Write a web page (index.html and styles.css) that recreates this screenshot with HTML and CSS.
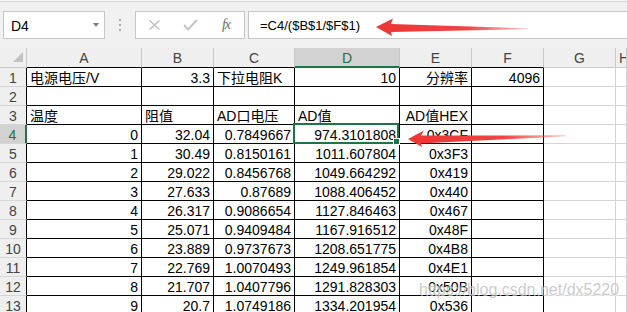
FILE: index.html
```html
<!DOCTYPE html>
<html lang="zh-CN">
<head>
    <meta charset="UTF-8">
    <title>AD值计算</title>
    <link rel="stylesheet" href="styles.css">
</head>
<body>
    <div class="bar">
        <div class="namebox">D4<span class="caret"></span></div>
        <div class="grip"><i></i><i></i><i></i></div>
        <div class="fxbox">
            <span class="btn"><svg width="11" height="10" viewBox="0 0 11 10"><path d="M0.5 0.5 10.5 9.5 M10.5 0.5 0.5 9.5" stroke="#bdbdbd" stroke-width="1.3" fill="none"/></svg></span>
            <span class="btn"><svg width="15" height="12" viewBox="0 0 15 12"><path d="M1 6 5 10.5 14 1" stroke="#c4c4c4" stroke-width="2" fill="none"/></svg></span>
            <span class="btn fx">fx</span>
        </div>
        <div class="formula">=C4/($B$1/$F$1)</div>
    </div>

    <div class="sheet">
        <div class="corner"><svg width="10" height="10" viewBox="0 0 10 10"><path d="M10 0 10 10 0 10Z" fill="#c2c2c2"/></svg></div>
        <div class="ch">A</div><div class="ch">B</div><div class="ch">C</div><div class="ch on">D</div><div class="ch">E</div><div class="ch">F</div><div class="ch g">G</div><div class="ch g">H</div>

        <div class="rh">1</div><div class="c">电源电压/V</div><div class="c n">3.3</div><div class="c">下拉电阻K</div><div class="c n">10</div><div class="c n">分辨率</div><div class="c n">4096</div><div class="c g"></div><div class="c g"></div>
        <div class="rh">2</div><div class="c"></div><div class="c"></div><div class="c"></div><div class="c"></div><div class="c"></div><div class="c"></div><div class="c g"></div><div class="c g"></div>
        <div class="rh">3</div><div class="c">温度</div><div class="c">阻值</div><div class="c">AD口电压</div><div class="c">AD值</div><div class="c n">AD值HEX</div><div class="c"></div><div class="c g"></div><div class="c g"></div>
        <div class="rh on">4</div><div class="c n">0</div><div class="c n">32.04</div><div class="c n">0.7849667</div><div class="c n sel">974.3101808</div><div class="c n">0x3CF</div><div class="c"></div><div class="c g"></div><div class="c g"></div>
        <div class="rh">5</div><div class="c n">1</div><div class="c n">30.49</div><div class="c n">0.8150161</div><div class="c n">1011.607804</div><div class="c n">0x3F3</div><div class="c"></div><div class="c g"></div><div class="c g"></div>
        <div class="rh">6</div><div class="c n">2</div><div class="c n">29.022</div><div class="c n">0.8456768</div><div class="c n">1049.664292</div><div class="c n">0x419</div><div class="c"></div><div class="c g"></div><div class="c g"></div>
        <div class="rh">7</div><div class="c n">3</div><div class="c n">27.633</div><div class="c n">0.87689</div><div class="c n">1088.406452</div><div class="c n">0x440</div><div class="c"></div><div class="c g"></div><div class="c g"></div>
        <div class="rh">8</div><div class="c n">4</div><div class="c n">26.317</div><div class="c n">0.9086654</div><div class="c n">1127.846463</div><div class="c n">0x467</div><div class="c"></div><div class="c g"></div><div class="c g"></div>
        <div class="rh">9</div><div class="c n">5</div><div class="c n">25.071</div><div class="c n">0.9409484</div><div class="c n">1167.916512</div><div class="c n">0x48F</div><div class="c"></div><div class="c g"></div><div class="c g"></div>
        <div class="rh">10</div><div class="c n">6</div><div class="c n">23.889</div><div class="c n">0.9737673</div><div class="c n">1208.651775</div><div class="c n">0x4B8</div><div class="c"></div><div class="c g"></div><div class="c g"></div>
        <div class="rh">11</div><div class="c n">7</div><div class="c n">22.769</div><div class="c n">1.0070493</div><div class="c n">1249.961854</div><div class="c n">0x4E1</div><div class="c"></div><div class="c g"></div><div class="c g"></div>
        <div class="rh">12</div><div class="c n">8</div><div class="c n">21.707</div><div class="c n">1.0407796</div><div class="c n">1291.828303</div><div class="c n">0x50B</div><div class="c"></div><div class="c g"></div><div class="c g"></div>
        <div class="rh">13</div><div class="c n">9</div><div class="c n">20.7</div><div class="c n">1.0749186</div><div class="c n">1334.201954</div><div class="c n">0x536</div><div class="c"></div><div class="c g"></div><div class="c g"></div>
    </div>

    <!-- annotations drawn on top of the screenshot -->
    <svg class="marks" width="627" height="312" viewBox="0 0 627 312">
        <defs>
            <linearGradient id="fade1" gradientUnits="userSpaceOnUse" x1="376" y1="0" x2="528" y2="0">
                <stop offset="0" stop-color="#ee3535"/>
                <stop offset="0.6" stop-color="#f04444"/>
                <stop offset="1" stop-color="#f04444" stop-opacity="0.3"/>
            </linearGradient>
            <linearGradient id="fade2" gradientUnits="userSpaceOnUse" x1="408" y1="0" x2="566" y2="0">
                <stop offset="0" stop-color="#ee3535"/>
                <stop offset="0.6" stop-color="#f04444"/>
                <stop offset="1" stop-color="#f04444" stop-opacity="0.3"/>
            </linearGradient>
        </defs>
        <polygon points="376,27 393,18.5 391,24 528,28.4 528,29.2 391,32 392,36" fill="url(#fade1)"/>
        <polygon points="408,139 424,130.5 421,135.5 566,135.3 566,136.3 421,143.5 422,147" fill="url(#fade2)"/>
    </svg>
    <div class="watermark">https://blog.csdn.net/dx5220</div>
</body>
</html>
```

FILE: styles.css
```css
body {
  margin: 0;
  width: 627px;
  height: 312px;
  overflow: hidden;
  font-family: "Liberation Sans", "Noto Sans CJK SC", sans-serif;
  font-size: 14px;
  color: #000;
  background: #fff;
}

/* formula bar */
.bar {
  box-sizing: border-box;
  height: 48px;
  padding-top: 11px;
  display: flex;
  align-items: flex-start;
  background: linear-gradient(#f7f7f7 0 1px, #d6d6d6 1px 2px, #f1f1f1 2px);
}
.namebox {
  box-sizing: border-box;
  margin-left: 3px;
  width: 102px;
  height: 28px;
  padding: 1px 5px 0 7px;
  display: flex;
  align-items: center;
  justify-content: space-between;
  background: #fff;
  border: 1px solid #c6c6c6;
}
.caret {
  width: 0;
  height: 0;
  margin-top: -1px;
  border-left: 3.5px solid transparent;
  border-right: 3.5px solid transparent;
  border-top: 4px solid #7a7a7a;
}
.grip {
  width: 30px;
  padding-top: 8px;
  display: flex;
  flex-direction: column;
  align-items: center;
  gap: 3px;
}
.grip i {
  width: 2px;
  height: 2px;
  background: #ababab;
}
.fxbox {
  box-sizing: border-box;
  width: 110px;
  height: 28px;
  display: flex;
  background: #fff;
  border: 1px solid #c6c6c6;
}
.btn {
  flex: 1;
  display: flex;
  align-items: center;
  justify-content: center;
}
.fx {
  font-family: "Liberation Serif", serif;
  font-style: italic;
  font-size: 14px;
  color: #6b6b6b;
  letter-spacing: -1px;
}
.formula {
  box-sizing: border-box;
  flex: 1;
  height: 28px;
  margin-left: 3px;
  margin-right: -2px;
  padding: 1px 0 0 11px;
  line-height: 26px;
  font-size: 13px;
  background: #fff;
  border: 1px solid #c6c6c6;
}

/* grid */
.sheet {
  display: grid;
  grid-template-columns: 27px 115px 72px 81px 105px 72px 72px 72px 1fr;
  grid-template-rows: 20px;
  grid-auto-rows: 19px;
}
.sheet > div {
  box-sizing: border-box;
  padding: 3px 3px 0 3px;
  line-height: 15px;
  white-space: nowrap;
  overflow: hidden;
}
.corner {
  display: flex;
  align-items: flex-end;
  justify-content: flex-end;
  background: #efefef;
  border-right: 1px solid #c9c9c9;
  border-bottom: 1px solid #c9c9c9;
}
.sheet > .corner {
  padding: 0 3px 5px 0;
}
.ch {
  text-align: center;
  color: #444;
  background: #efefef;
  border-right: 1px solid #c9c9c9;
  border-bottom: 1px solid #000;
}
.ch.g {
  border-bottom-color: #c9c9c9;
}
.ch.on,
.rh.on {
  background: #d2d2d2;
  color: #217346;
}
.ch.on {
  border-bottom: 2px solid #217346;
}
.rh {
  text-align: center;
  color: #444;
  background: #efefef;
  border-right: 1px solid #000;
  border-bottom: 1px solid #d6d6d6;
}
.rh.on {
  border-right: 2px solid #217346;
}
.c {
  border-right: 1px solid #000;
  border-bottom: 1px solid #000;
}
.n {
  text-align: right;
}
.c.g {
  border-right-color: #d4d4d4;
  border-bottom-color: #d4d4d4;
}

/* active cell */
.sheet > .sel {
  position: relative;
  overflow: visible;
}
.sel::after {
  content: "";
  position: absolute;
  left: -2px;
  top: -2px;
  right: 0;
  bottom: -1px;
  border: 2px solid #217346;
}
.sel::before {
  content: "";
  position: absolute;
  right: -1px;
  bottom: -2px;
  width: 7px;
  height: 7px;
  box-sizing: border-box;
  background: #217346;
  border: 1px solid #fff;
  z-index: 1;
}

/* annotations */
.marks {
  position: absolute;
  left: 0;
  top: 0;
  pointer-events: none;
}
.watermark {
  position: absolute;
  left: 419px;
  top: 282px;
  font-size: 16px;
  line-height: 16px;
  color: rgba(185, 185, 185, 0.75);
  text-shadow: 1px 1px 0 rgba(255, 255, 255, 0.6);
  pointer-events: none;
}
```
